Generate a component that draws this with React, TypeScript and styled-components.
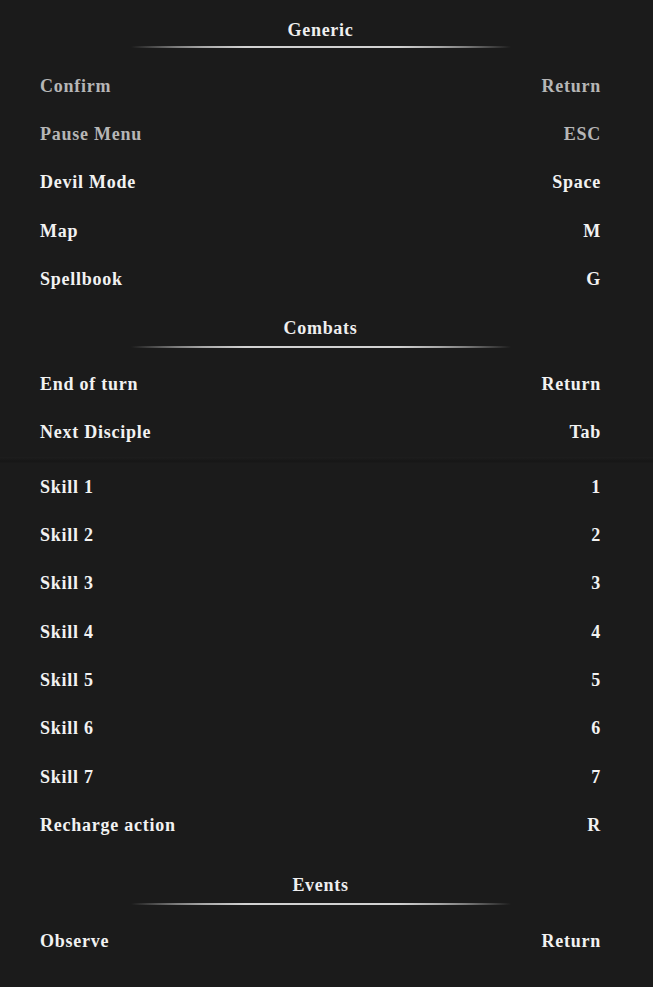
import styled, { createGlobalStyle } from 'styled-components';

// key bindings, grouped like the in-game controls page
type Binding = { label: string; key: string; muted?: boolean };

const generic: Binding[] = [
  { label: 'Confirm', key: 'Return', muted: true },
  { label: 'Pause Menu', key: 'ESC', muted: true },
  { label: 'Devil Mode', key: 'Space' },
  { label: 'Map', key: 'M' },
  { label: 'Spellbook', key: 'G' },
];

const combatsTop: Binding[] = [
  { label: 'End of turn', key: 'Return' },
  { label: 'Next Disciple', key: 'Tab' },
];

const combatsSkills: Binding[] = [
  { label: 'Skill 1', key: '1' },
  { label: 'Skill 2', key: '2' },
  { label: 'Skill 3', key: '3' },
  { label: 'Skill 4', key: '4' },
  { label: 'Skill 5', key: '5' },
  { label: 'Skill 6', key: '6' },
  { label: 'Skill 7', key: '7' },
  { label: 'Recharge action', key: 'R' },
];

const events: Binding[] = [{ label: 'Observe', key: 'Return' }];

const GlobalStyle = createGlobalStyle`
  html, body {
    margin: 0;
    padding: 0;
    background: #1b1b1b;
  }
  body {
    font-family: 'Liberation Serif', 'DejaVu Serif', serif;
    -webkit-font-smoothing: antialiased;
  }
`;

const Page = styled.div`
  display: flex;
  flex-direction: column;
  padding: 5px 52px 0 40px;
  min-height: 987px;
  box-sizing: border-box;
  background: #1b1b1b;
`;

const SectionHeader = styled.div<{ $top: number; $bottom: number }>`
  display: flex;
  flex-direction: column;
  align-items: center;
  padding-top: ${(p) => p.$top}px;
  padding-bottom: ${(p) => p.$bottom}px;
`;

const Title = styled.h2`
  margin: 0;
  height: 24px;
  line-height: 24px;
  font-size: 18px;
  font-weight: 700;
  color: #efefef;
  letter-spacing: 0.7px;
`;

const Rule = styled.div<{ $gap: number }>`
  margin-top: ${(p) => p.$gap}px;
  width: 380px;
  height: 2px;
  background: linear-gradient(
    to right,
    rgba(140, 140, 140, 0) 0%,
    rgba(150, 150, 150, 0.8) 12%,
    #a8a8a8 19%,
    #d2d2d2 30%,
    #d2d2d2 70%,
    #a8a8a8 81%,
    rgba(150, 150, 150, 0.8) 88%,
    rgba(140, 140, 140, 0) 100%
  );
`;

const Row = styled.div<{ $muted?: boolean }>`
  display: flex;
  align-items: center;
  justify-content: space-between;
  height: 48.3px;
  font-size: 18px;
  font-weight: 700;
  letter-spacing: 0.75px;
  color: ${(p) => (p.$muted ? '#b6b6b6' : '#f2f2f2')};
`;

const Shade = styled.div`
  height: 6px;
  margin: 0 -52px 0 -40px;
  background: linear-gradient(
    to bottom,
    rgba(255, 255, 255, 0.012) 0%,
    rgba(0, 0, 0, 0.16) 70%,
    rgba(0, 0, 0, 0.05) 100%
  );
`;

const Spacer = styled.div<{ $h: number }>`
  height: ${(p) => p.$h}px;
`;

function Header({
  title,
  top,
  gap,
  bottom,
}: {
  title: string;
  top: number;
  gap: number;
  bottom: number;
}) {
  return (
    <SectionHeader $top={top} $bottom={bottom}>
      <Title>{title}</Title>
      <Rule $gap={gap} />
    </SectionHeader>
  );
}

function Rows({ items }: { items: Binding[] }) {
  return (
    <>
      {items.map((b) => (
        <Row key={b.label} $muted={b.muted}>
          <span>{b.label}</span>
          <span>{b.key}</span>
        </Row>
      ))}
    </>
  );
}

export default function App() {
  return (
    <>
      <GlobalStyle />
      <Page>
        <Header title="Generic" top={13} gap={4} bottom={14} />
        <Rows items={generic} />
        <Header title="Combats" top={13} gap={6} bottom={12} />
        <Rows items={combatsTop} />
        <Shade />
        <Rows items={combatsSkills} />
        <Spacer $h={11} />
        <Header title="Events" top={13} gap={6} bottom={12} />
        <Rows items={events} />
      </Page>
    </>
  );
}
